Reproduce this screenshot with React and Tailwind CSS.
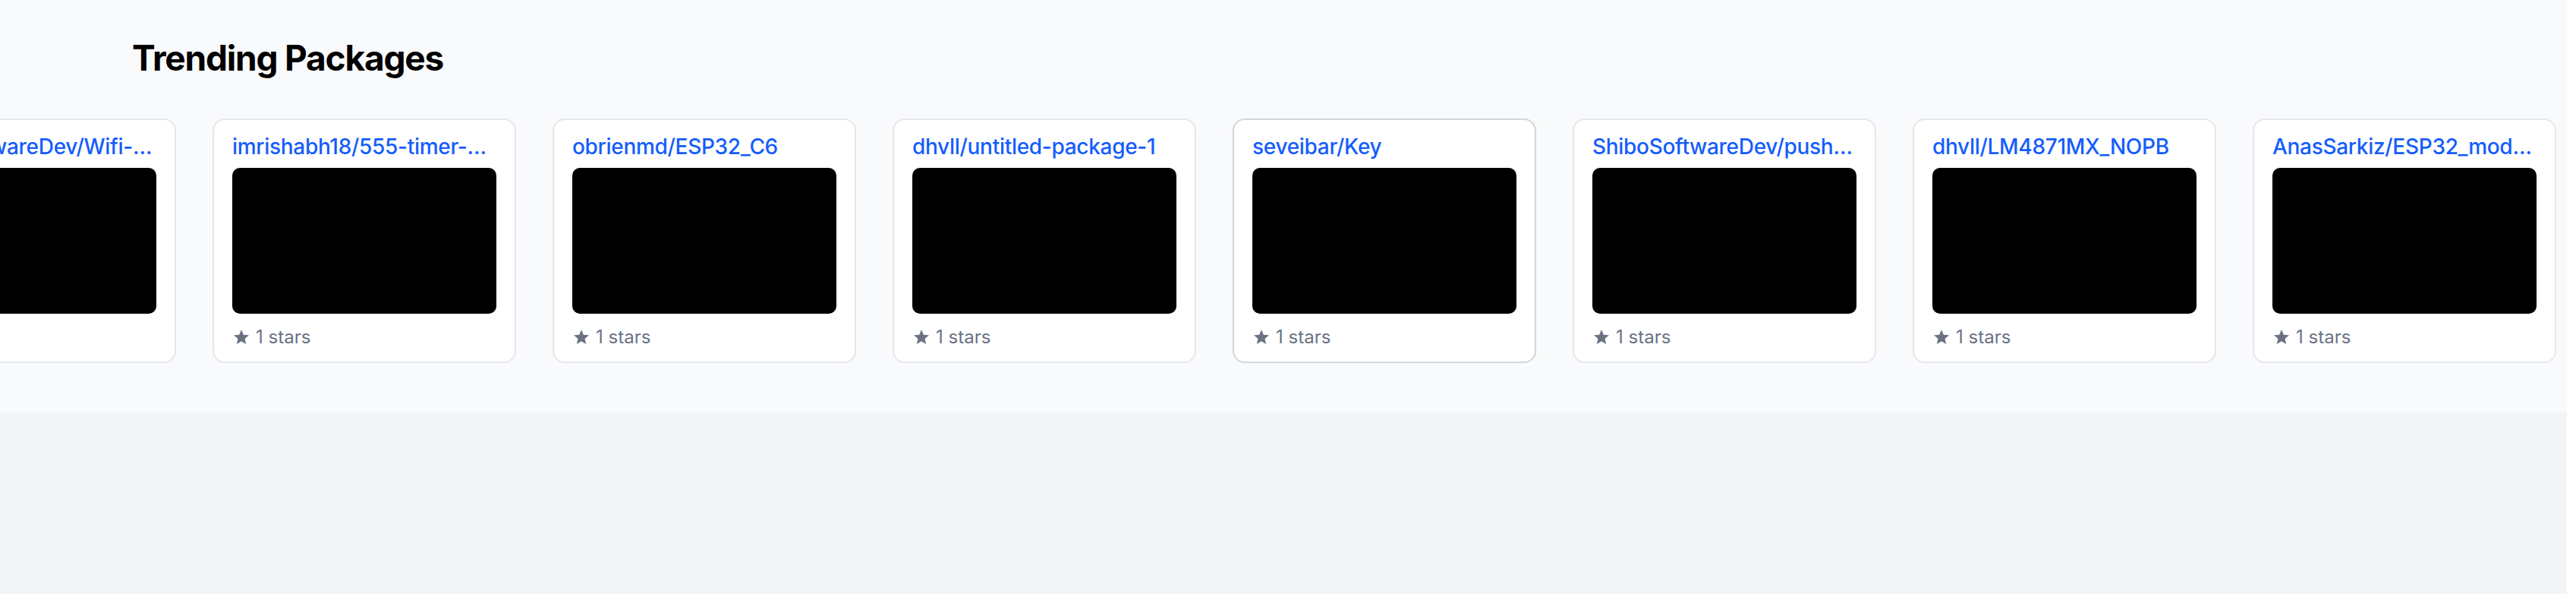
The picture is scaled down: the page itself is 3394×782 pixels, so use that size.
import React from 'react';

const packages = [
    { name: 'ShiboSoftwareDev/Wifi-Manager', stars: 1 },
    { name: 'imrishabh18/555-timer-circuit', stars: 1 },
    { name: 'obrienmd/ESP32_C6', stars: 1 },
    { name: 'dhvll/untitled-package-1', stars: 1 },
    { name: 'seveibar/Key', stars: 1, hovered: true },
    { name: 'ShiboSoftwareDev/pushbutton-board', stars: 1 },
    { name: 'dhvll/LM4871MX_NOPB', stars: 1 },
    { name: 'AnasSarkiz/ESP32_module_board', stars: 1 },
];

function StarIcon() {
    return (
        <svg width="24" height="24" viewBox="0 0 24 24" fill="currentColor" className="shrink-0">
            <path d="M12 17.27L18.18 21l-1.64-7.03L22 9.24l-7.19-.61L12 2 9.19 8.63 2 9.24l5.46 4.73L5.82 21z" />
        </svg>
    );
}

function PackageCard({ pkg }) {
    return (
        <div
            className={
                pkg.hovered
                    ? 'w-[400px] shrink-0 bg-white border-2 border-gray-300 rounded-[16px] px-[24px] pt-[15px] pb-[16px]'
                    : 'w-[400px] shrink-0 bg-white border-2 border-gray-200 rounded-[16px] px-[24px] pt-[15px] pb-[16px]'
            }
        >
            <div className="text-[28px] leading-[40px] font-medium tracking-[-0.3px] text-blue-600 truncate">{pkg.name}</div>
            <div className="mt-[8px] h-[192px] bg-black rounded-[10px]"></div>
            <div className="mt-[15px] flex items-center gap-[7px] text-[24px] leading-[32px] text-gray-500">
                <StarIcon />
                <span>{pkg.stars} stars</span>
            </div>
        </div>
    );
}

export default function App() {
    return (
        <div className="flex min-h-screen font-['Inter','Liberation_Sans',sans-serif]">
            <div className="flex-1 flex flex-col bg-gray-100">
                {/* Trending section */}
                <section className="bg-gray-50 h-[543px] pt-[44px] overflow-hidden">
                    <h2 className="pl-[174px] text-[46px] leading-[64px] font-bold tracking-[-1.2px] text-black">Trending Packages</h2>
                    <div className="mt-[48px] overflow-hidden">
                        <div className="flex gap-[48px] -ml-[168px]">
                            {packages.map(pkg => (
                                <PackageCard key={pkg.name} pkg={pkg} />
                            ))}
                        </div>
                    </div>
                </section>
                <div className="flex-1"></div>
            </div>
            <div className="w-[12px] bg-white"></div>
        </div>
    );
}
